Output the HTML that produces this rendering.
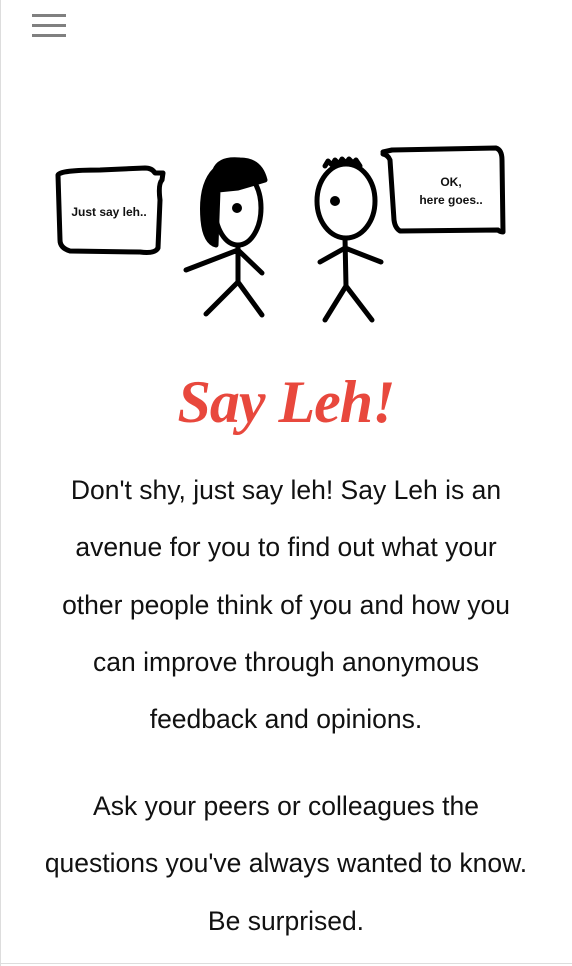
<!DOCTYPE html>
<html><head><meta charset="utf-8"><style>
html,body{margin:0;padding:0;background:#fff;}
body{width:572px;height:966px;position:relative;overflow:hidden;font-family:"Liberation Sans",sans-serif;}
.lb{position:absolute;left:0;top:0;width:1px;height:966px;background:#ddd;}
.bb{position:absolute;left:0;bottom:2px;width:572px;height:1px;background:#ddd;}
.hb{position:absolute;left:32px;width:34px;height:3px;background:#808080;}
h1{position:absolute;top:366px;left:0;width:572px;text-align:center;margin:0;font-family:"Liberation Serif",serif;font-style:italic;font-weight:bold;font-size:60px;color:#e8483d;letter-spacing:-1px;line-height:72px;}
.p{position:absolute;left:0;width:572px;text-align:center;font-size:26.5px;line-height:57.3px;color:#111;margin:0;white-space:nowrap;letter-spacing:0;}
</style></head><body>
<div class="lb"></div><div class="bb"></div>
<div class="hb" style="top:14px"></div><div class="hb" style="top:24px"></div><div class="hb" style="top:34px"></div>
<svg style="position:absolute;left:0;top:0" width="572" height="340" viewBox="0 0 572 340" fill="none" stroke="#000" stroke-width="5" stroke-linecap="round" stroke-linejoin="round">
<path d="M58 175 Q60 170 100 170 L145 168 Q152 168 155 173 L163 173 L162 180 Q158 184 160 200 L158 248 Q155 254 140 252 L70 251 Q60 248 60 240 Z"/>
<text x="109" y="216" font-family="Liberation Sans" font-weight="bold" font-size="12" fill="#111" stroke="none" text-anchor="middle">Just say leh..</text>
<path d="M383 152 L392 150 L496 148 Q502 150 502 160 L503 232 Q500 232 498 230 L400 231 Q395 228 394 220 L390 160 Q388 155 383 154"/>
<text x="451" y="186" font-family="Liberation Sans" font-weight="bold" font-size="12" fill="#111" stroke="none" text-anchor="middle">OK,</text>
<text x="451" y="204" font-family="Liberation Sans" font-weight="bold" font-size="12" fill="#111" stroke="none" text-anchor="middle">here goes..</text>
<ellipse cx="238" cy="208" rx="23" ry="37"/>
<path d="M215 170 Q220 158 240 160 Q260 160 265 180 L238 188 L218 190 L216 245 Q205 242 203 220 Q200 185 215 170 Z" fill="#000"/>
<circle cx="237" cy="208" r="2.5" fill="#000"/>
<path d="M238 245 L238 282 M238 282 L206 314 M238 282 L262 315 M238 250 L186 270 M238 250 L262 273"/>
<ellipse cx="346" cy="201" rx="29" ry="37"/>
<path d="M325 166 l3-5 l4 4 l3-5 l4 4 l3-5 l4 4 l3-4 l4 4 l3-3 l4 6" />
<circle cx="335" cy="201" r="2.5" fill="#000"/>
<path d="M345 238 L346 286 M346 286 L325 320 M346 286 L372 320 M345 248 L320 262 M345 248 L381 262"/>
</svg>
<h1>Say Leh!</h1>
<p class="p" style="top:462px">Don't shy, just say leh! Say Leh is an<br>avenue for you to find out what your<br>other people think of you and how you<br>can improve through anonymous<br>feedback and opinions.</p>
<p class="p" style="top:778px">Ask your peers or colleagues the<br>questions you've always wanted to know.<br>Be surprised.</p>
</body></html>
